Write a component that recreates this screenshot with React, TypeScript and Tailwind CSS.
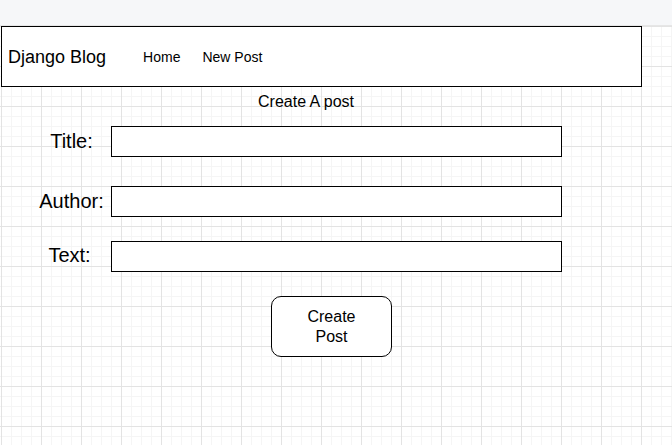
import React from "react";

export default function App() {
  const font = { fontFamily: '"Liberation Sans", Arial, sans-serif' };
  return (
    <div className="w-[672px] h-[445px] overflow-hidden bg-white text-black" style={font}>
      <div className="h-[26px] bg-[#f6f7f9] border-b border-[#e6e6e6]" />
      <div className="h-[419px] bg-white bg-[linear-gradient(to_right,#e3e3e3_1px,transparent_1px),linear-gradient(to_bottom,#e3e3e3_1px,transparent_1px),linear-gradient(to_right,#f5f5f5_1px,transparent_1px),linear-gradient(to_bottom,#f5f5f5_1px,transparent_1px)] bg-[size:40px_40px,40px_40px,10px_10px,10px_10px] bg-[position:1px_0px,1px_0px,1px_0px,1px_0px]">
        <div className="ml-[1px] w-[641px] h-[61px] border border-black bg-white flex items-center pl-[6px]">
          <span className="text-[18px] leading-[22px]">Django Blog</span>
          <span className="ml-[37px] text-[14px] leading-[18px]">Home</span>
          <span className="ml-[22px] text-[14px] leading-[18px]">New Post</span>
        </div>
        <div className="mt-[6px] pl-[258px] text-[16px] leading-[18px]">Create A post</div>
        <div className="mt-[15px] flex items-center">
          <div className="ml-[32px] w-[79px] text-center text-[20px] leading-[24px] mb-[2px]">Title:</div>
          <div className="w-[451px] h-[31px] border border-black bg-white" />
        </div>
        <div className="mt-[29px] flex items-center">
          <div className="ml-[32px] w-[79px] text-center text-[20px] leading-[24px] mb-[1px]">Author:</div>
          <div className="w-[451px] h-[31px] border border-black bg-white" />
        </div>
        <div className="mt-[24px] flex items-center">
          <div className="ml-[30px] w-[79px] mr-[2px] text-center text-[20px] leading-[24px] mb-[3px]">Text:</div>
          <div className="w-[451px] h-[31px] border border-black bg-white" />
        </div>
        <div className="mt-[24px] ml-[271px] w-[121px] h-[61px] border border-black rounded-[10px] bg-white flex flex-col items-center justify-center text-[16px] leading-[20px]">
          <span>Create</span>
          <span>Post</span>
        </div>
      </div>
    </div>
  );
}
